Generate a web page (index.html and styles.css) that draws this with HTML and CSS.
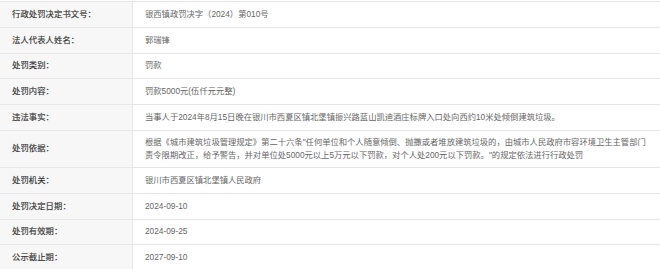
FILE: index.html
```html
<!DOCTYPE html>
<html lang="zh-CN">

<head>
  <meta charset="UTF-8">
  <meta name="viewport" content="width=device-width, initial-scale=1.0">
  <title>行政处罚信息</title>
  <link rel="stylesheet" href="styles.css">
</head>

<body>
  <div class="info-table">
    <div class="info-row">
      <div class="info-label">行政处罚决定书文号：</div>
      <div class="info-value">银西镇政罚决字（2024）第010号</div>
    </div>
    <div class="info-row">
      <div class="info-label">法人代表人姓名：</div>
      <div class="info-value">郭瑞锋</div>
    </div>
    <div class="info-row">
      <div class="info-label">处罚类别：</div>
      <div class="info-value">罚款</div>
    </div>
    <div class="info-row">
      <div class="info-label">处罚内容：</div>
      <div class="info-value">罚款5000元(伍仟元元整)</div>
    </div>
    <div class="info-row">
      <div class="info-label">违法事实：</div>
      <div class="info-value">当事人于2024年8月15日晚在银川市西夏区镇北堡镇振兴路蓝山凯迪酒庄标牌入口处向西约10米处倾倒建筑垃圾。</div>
    </div>
    <div class="info-row">
      <div class="info-label">处罚依据：</div>
      <div class="info-value">根据《城市建筑垃圾管理规定》第二十六条"任何单位和个人随意倾倒、抛撒或者堆放建筑垃圾的，由城市人民政府市容环境卫生主管部门责令限期改正，给予警告，并对单位处5000元以上5万元以下罚款，对个人处200元以下罚款。"的规定依法进行行政处罚</div>
    </div>
    <div class="info-row">
      <div class="info-label">处罚机关：</div>
      <div class="info-value">银川市西夏区镇北堡镇人民政府</div>
    </div>
    <div class="info-row">
      <div class="info-label">处罚决定日期：</div>
      <div class="info-value">2024-09-10</div>
    </div>
    <div class="info-row">
      <div class="info-label">处罚有效期：</div>
      <div class="info-value">2024-09-25</div>
    </div>
    <div class="info-row">
      <div class="info-label">公示截止期：</div>
      <div class="info-value">2027-09-10</div>
    </div>
  </div>
</body>

</html>
```

FILE: styles.css
```css
* {
  margin: 0;
  padding: 0;
  box-sizing: border-box;
}

body {
  background: #fff;
  font-family: "Liberation Sans", "Noto Sans CJK SC", sans-serif;
  font-size: 8.3px;
  line-height: 13px;
}

.info-table {
  margin-top: 1px;
  border-top: 1px solid #e6e6e6;
  width: 660px;
}

.info-row {
  display: grid;
  grid-template-columns: 133px 1fr;
  border-bottom: 1px solid #e6e6e6;
  min-height: 25.8px;
}

.info-label {
  background: #f7f7f7;
  border-right: 1px solid #e6e6e6;
  color: #333;
  padding: 5px 0 5px 12px;
  letter-spacing: 0.1px;
  display: flex;
  align-items: center;
  -webkit-text-stroke: 0.15px #333;
}

.info-value {
  color: #666;
  padding: 5px 8px 5px 12px;
  display: flex;
  align-items: center;
}
```
